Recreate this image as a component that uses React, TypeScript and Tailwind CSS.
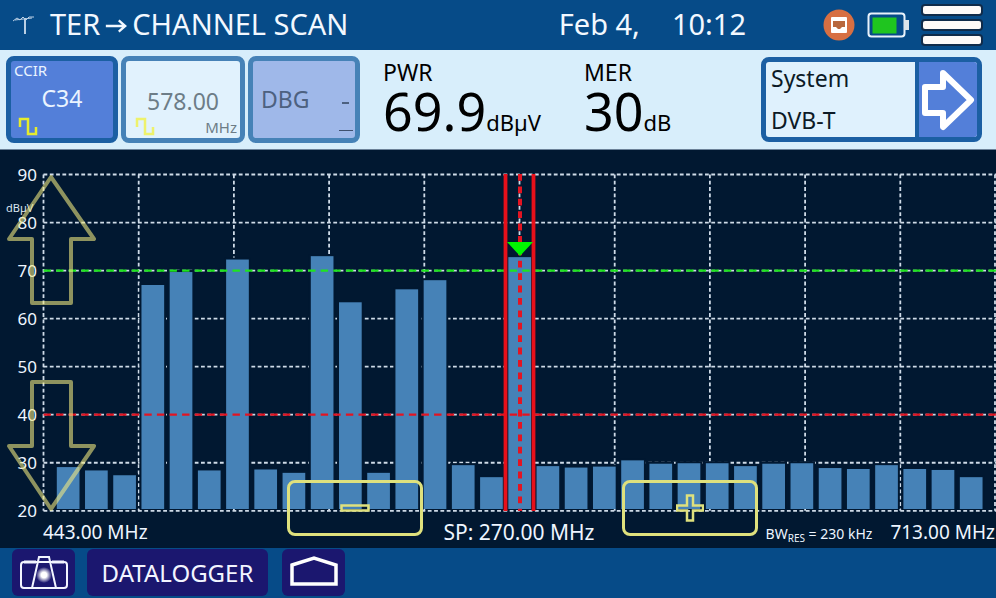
import React from 'react';

const GRID_TOP = 174.5;
const GRID_BOTTOM = 510.8;
const GRID_LEFT = 43.5;
const COLUMN = 95.2;
const BAR_PITCH = 28.22;

const levels = [90, 80, 70, 60, 50, 40, 30, 20];
const yOf = (level: number) => GRID_TOP + ((90 - level) * (GRID_BOTTOM - GRID_TOP)) / 70;

// Channel power in dBµV, one entry per channel across the span.
const channels = [
  29.1, 28.4, 27.4, 67, 69.7, 28.4, 72.3, 28.6, 27.9, 73, 63.4, 27.9, 66.1, 68, 29.5, 27, 72.8,
  29.3, 29, 29.2, 30.5, 29.8, 29.9, 29.9, 29.3, 29.8, 29.9, 28.9, 28.7, 29.5, 28.7, 28.5, 27,
];

function Wave({ className }: { className: string }) {
  return (
    <svg viewBox="0 0 20 20" className={className} fill="none" stroke="currentColor" strokeWidth="2.500" aria-hidden="true">
      <path d="M2 10V2H10V17H18V10" />
    </svg>
  );
}

function Metric({ label, value, unit }: { label: string; value: string; unit: string }) {
  return (
    <div className="text-black">
      <div className="text-[23px] leading-6">{label}</div>
      <div className="flex items-baseline leading-[54px]">
        <span className="text-[52px]">{value}</span>
        <span className="text-[22px]">{unit}</span>
      </div>
    </div>
  );
}

function Header() {
  return (
    <header className="flex h-[50px] items-center bg-[#064b88] pl-3 pr-[13px] text-[29px] text-[#f2f8ff]">
      <svg viewBox="0 0 24 20" className="mr-[14px] h-5 w-6 shrink-0" fill="none" stroke="#b9cfe4" aria-hidden="true">
        <path d="M1 6L5 3L8 5L11 2L14 5L17 2L22 2M3 5L20 3" strokeWidth="1" />
        <path d="M13 3V19" strokeWidth="2" />
      </svg>
      <h1 className="flex items-center whitespace-nowrap pb-[3px]">
        TER
        <svg viewBox="0 0 26 20" className="mx-1 mt-1 h-5 w-6" fill="none" stroke="currentColor" strokeWidth="2.500" aria-label="to">
          <path d="M2 10H23M16 4L23 10L16 16" />
        </svg>
        CHANNEL SCAN
      </h1>
      <div className="ml-auto mr-[77px] flex gap-8 whitespace-nowrap pb-[3px]">
        <span>Feb 4,</span>
        <time>10:12</time>
      </div>
      <svg viewBox="0 0 32 32" className="mr-3 h-8 w-8 shrink-0" role="img" aria-label="Network connected">
        <circle cx="16" cy="16" r="15.5" fill="#d76f42" />
        <rect x="8" y="8" width="16" height="16" rx="1" fill="#fff" />
        <path d="M10 12H22V18H19L17 20H15L13 18H10Z" fill="#b8673d" />
      </svg>
      <svg viewBox="0 0 42 28" className="mr-3 h-7 w-[42px] shrink-0" role="img" aria-label="Battery">
        <rect x="1.5" y="2.5" width="36" height="23" rx="3" fill="#064b88" stroke="#e8f2fb" strokeWidth="2" />
        <rect x="37" y="9" width="5" height="10" fill="#dce4ea" />
        <rect x="5.500" y="6.500" width="24" height="16" fill="#1fc51f" />
      </svg>
      <button aria-label="Menu" className="flex shrink-0 flex-col gap-[3px]">
        <span className="block h-3 w-[62px] rounded border-2 border-[#102b49] bg-[#fdfaf8]" />
        <span className="block h-3 w-[62px] rounded border-2 border-[#102b49] bg-[#fdfaf8]" />
        <span className="block h-3 w-[62px] rounded border-2 border-[#102b49] bg-[#fdfaf8]" />
      </button>
    </header>
  );
}

function Tuning() {
  return (
    <section className="flex h-[100px] items-start border-b border-[#6c8299] bg-[#d8eefb] pl-[6px] pr-[14px] pt-[6px]">
      <div className="flex shrink-0 gap-[3px] text-[23px]">
        <button className="flex h-[87px] w-[112px] flex-col justify-between rounded-lg border-[5px] border-[#1b5fa3] bg-[#537fd9] px-[3px] pb-px text-left text-[#eaf4ff]">
          <span className="text-[15px] leading-[18px]">CCIR</span>
          <span className="w-full text-center leading-8">C34</span>
          <Wave className="ml-1 h-5 w-5 text-[#e6ec2c]" />
        </button>
        <button className="flex h-[87px] w-[124px] flex-col justify-end rounded-lg border-[5px] border-[#4682b7] bg-[#e1f2fd] px-[3px] text-[#6d7d87]">
          <span className="w-full text-center leading-8">578.00</span>
          <span className="flex w-full items-end justify-between pb-px pl-[6px] text-[15px] leading-5">
            <Wave className="h-5 w-5 text-[#eef26c]" />
            MHz
          </span>
        </button>
        <button className="flex h-[87px] w-[112px] items-center justify-between rounded-lg border-[5px] border-[#4682b7] bg-[#9fb8e9] pl-2 pr-[2px] text-[#4d6180]">
          <span>DBG</span>
          <span className="flex h-full flex-col items-end justify-end gap-[26px] pb-[7px]">
            <span className="mr-1 block h-[2px] w-[7px] bg-[#4d6180]" />
            <span className="block h-px w-[14px] bg-[#3f506e]" />
          </span>
        </button>
      </div>
      <div className="ml-[23px] mt-1 grid shrink-0 grid-cols-[201px_auto]">
        <Metric label="PWR" value="69.9" unit="dBµV" />
        <Metric label="MER" value="30" unit="dB" />
      </div>
      <div className="ml-auto mt-px flex h-[85px] w-[221px] shrink-0 overflow-hidden rounded-lg border-[5px] border-[#1b5fa3] bg-[#dff1fd]">
        <button className="flex flex-1 flex-col justify-between pb-px pl-[5px] text-left text-[23px] leading-8 text-[#0c1a26]">
          <span>System</span>
          <span>DVB-T</span>
        </button>
        <button aria-label="Next" className="flex w-[62px] items-center justify-center border-l-4 border-[#1b5fa3] bg-[#537fd9]">
          <svg viewBox="0 0 54 62" className="h-[62px] w-[54px]" fill="none" stroke="#fff" strokeWidth="6" strokeLinejoin="round">
            <path d="M4 18H22V4L50 31L22 58V44H4Z" />
          </svg>
        </button>
      </div>
    </section>
  );
}

function Spectrum() {
  return (
    <svg viewBox="0 150 996 372" className="block h-auto w-full font-['Noto_Sans',sans-serif]" role="img" aria-label="Channel power from 443 to 713 MHz">
      <g stroke="#cfdbe8" strokeWidth="1.800" strokeDasharray="3.8 2.5">
        {levels.map((level) => (
          <path key={level} d={`M${GRID_LEFT} ${yOf(level)}H996`} />
        ))}
        {Array.from({ length: 11 }, (_, i) => (
          <path key={i} d={`M${Math.min(GRID_LEFT + i * COLUMN, 995)} ${GRID_TOP}V${GRID_BOTTOM}`} />
        ))}
      </g>
      {channels.map((power, i) => {
        const x = 56.8 + i * BAR_PITCH;
        const top = yOf(power);
        return (
          <g key={i}>
            <rect x={x - 2} y={top - 2} width="26.600" height={511 - top} fill="#011831" />
            <rect x={x} y={top} width="22.700" height={509 - top} fill="#4682b7" />
          </g>
        );
      })}
      <path d="M43.500 270.600H996" stroke="#1fe41f" strokeWidth="2.200" strokeDasharray="7.4 5.2" />
      <path d="M43.500 414.700H996" stroke="#e31422" strokeWidth="2.200" strokeDasharray="7.4 5.2" />
      <path d="M520 174V511" stroke="#e31422" strokeWidth="4" strokeDasharray="6.8 5.6" />
      <path d="M505.500 174V511M533.500 174V511" stroke="#e8101a" strokeWidth="3.800" />
      <path d="M507 242H533L520 256Z" fill="#00f500" />
      <g fill="#eef5ff" fontSize="17" textAnchor="end">
        {levels.map((level) => (
          <text key={level} x="37" y={yOf(level) + 6}>
            {level}
          </text>
        ))}
      </g>
      <text x="6" y="212" fill="#dbe5f0" fontSize="11">
        dBµV
      </text>
    </svg>
  );
}

const zoomButton =
  'absolute bottom-3 flex h-14 w-[136px] items-start justify-center rounded-lg border-[3px] border-[#dfe17d]';

function Chart() {
  return (
    <section className="relative bg-[#011831] text-[19px] text-[#eef5ff]">
      <Spectrum />
      <div className="grid h-[26px] grid-cols-[1fr_auto_1fr] items-start whitespace-nowrap pl-[43px] pr-px leading-5">
        <span>443.00 MHz</span>
        <span className="text-[21px]">SP: 270.00 MHz</span>
        <span className="flex items-baseline justify-end gap-[18px]">
          <span className="text-[14px]">
            BW<sub className="bottom-[-3px] text-[10px]">RES</sub> = 230 kHz
          </span>
          713.00 MHz
        </span>
      </div>
      <button aria-label="Raise reference level" className="absolute left-[5px] top-6">
        <svg viewBox="0 0 92 132" className="h-[132px] w-[92px]" fill="none" stroke="#f5ec82" strokeOpacity="0.58" strokeWidth="4">
          <path d="M46 3L89 65H66V129H27V65H4Z" strokeLinejoin="round" />
        </svg>
      </button>
      <button aria-label="Lower reference level" className="absolute bottom-9 left-[5px]">
        <svg viewBox="0 0 92 132" className="h-[132px] w-[92px]" fill="none" stroke="#f5ec82" strokeOpacity="0.58" strokeWidth="4">
          <path d="M46 129L89 66H66V2H27V66H4Z" strokeLinejoin="round" />
        </svg>
      </button>
      <button aria-label="Decrease span" className={`${zoomButton} left-[28.8%]`}>
        <svg viewBox="0 0 30 8" className="mt-[21px] h-2 w-[30px]" fill="none" stroke="#dfe17d" strokeWidth="2.500">
          <rect x="1.500" y="1.500" width="27" height="5" />
        </svg>
      </button>
      <button aria-label="Increase span" className={`${zoomButton} left-[62.4%]`}>
        <svg viewBox="0 0 28 28" className="mt-[11px] h-7 w-7" fill="none" stroke="#dfe17d" strokeWidth="2.500">
          <path d="M11 1.500H17V11.500H27V16.500H17V26.500H11V16.500H1V11.500H11Z" />
        </svg>
      </button>
    </section>
  );
}

function Footer() {
  return (
    <footer className="flex h-[50px] items-start bg-[#064b88] pl-3 pt-px text-[#f2f5ff]">
      <button aria-label="Screenshot" className="mr-3 flex h-[47px] w-[63px] items-center justify-center rounded-md bg-[#1b176f]">
        <svg viewBox="0 0 48 34" className="h-[34px] w-12" fill="none" stroke="currentColor" strokeWidth="2">
          <defs>
            <radialGradient id="flash">
              <stop offset="0.35" stopColor="#fff" />
              <stop offset="1" stopColor="#fff" stopOpacity="0" />
            </radialGradient>
          </defs>
          <path d="M17 6H4Q1 6 1 9V29Q1 32 4 32H44Q47 32 47 29V9Q47 6 44 6H30M12 32L19 1H29L36 32M18 6H30" />
          <path d="M4 6H16M32 6H44" strokeWidth="3" />
          <circle cx="24" cy="19" r="8" fill="url(#flash)" stroke="none" />
        </svg>
      </button>
      <button className="mr-[14px] h-[47px] w-[181px] rounded-md bg-[#1b176f] text-[24px]">DATALOGGER</button>
      <button aria-label="Home" className="flex h-[47px] w-[63px] items-center justify-center rounded-md bg-[#1b176f]">
        <svg viewBox="0 0 50 32" className="mb-1 h-8 w-[50px]" fill="none" stroke="#fff" strokeWidth="3.500">
          <path d="M3 10L25 3L47 10V29H3Z" />
        </svg>
      </button>
    </footer>
  );
}

export default function App() {
  return (
    <main className="min-h-screen overflow-x-hidden bg-[#064b88] font-['Noto_Sans',sans-serif]">
      <Header />
      <Tuning />
      <Chart />
      <Footer />
    </main>
  );
}
